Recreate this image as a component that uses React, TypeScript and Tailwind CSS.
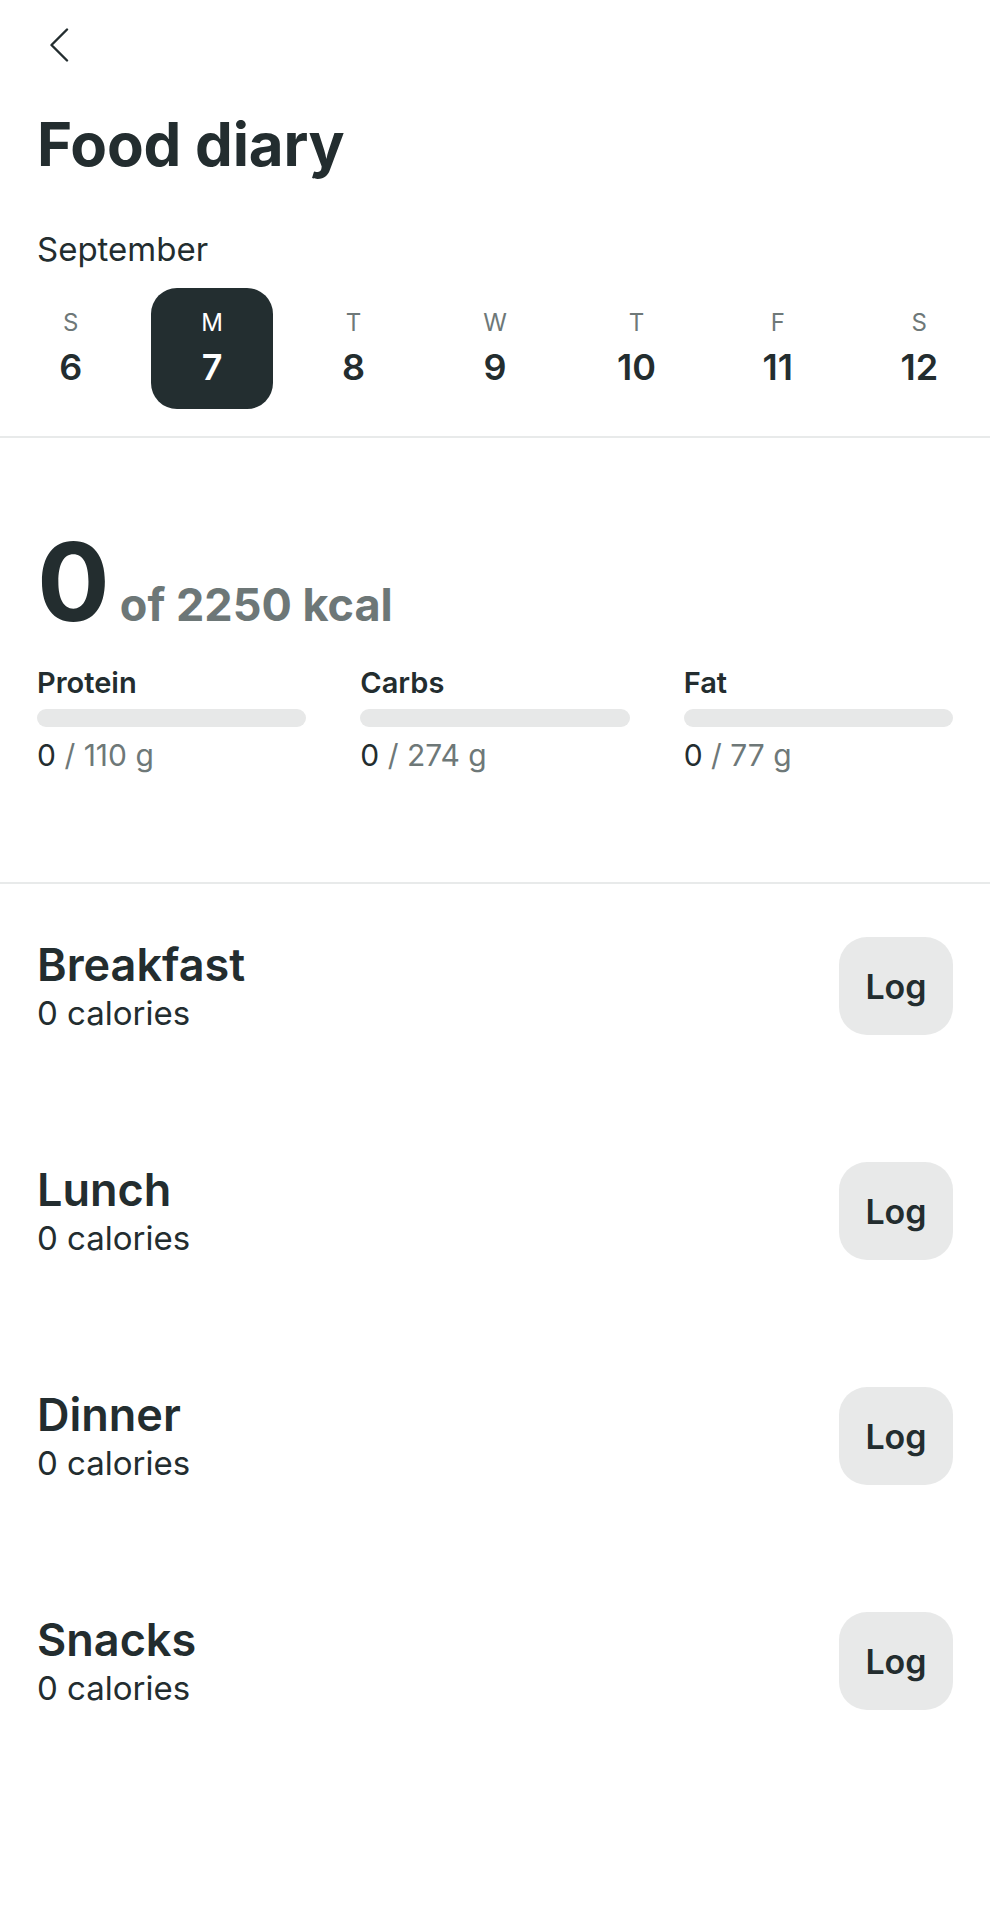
const days = [
  { letter: "S", num: 6 },
  { letter: "M", num: 7 },
  { letter: "T", num: 8 },
  { letter: "W", num: 9 },
  { letter: "T", num: 10 },
  { letter: "F", num: 11 },
  { letter: "S", num: 12 },
];

const macros = [
  { label: "Protein", goal: "110 g" },
  { label: "Carbs", goal: "274 g" },
  { label: "Fat", goal: "77 g" },
];

const meals = ["Breakfast", "Lunch", "Dinner", "Snacks"];

export default function App() {
  const selected = 7;

  return (
    <div className="min-h-[1920px] w-[990px] bg-white font-['Inter',sans-serif] text-[#232d2f]">
      {/* header */}
      <div className="pl-[49px] pt-[28px]">
        <svg width="20" height="34" viewBox="0 0 20 34" fill="none">
          <path d="M18 1.5L2.5 17L18 32.5" stroke="#232d2f" strokeWidth="2.4" strokeLinecap="round" strokeLinejoin="round" />
        </svg>
      </div>
      <h1 className="mt-[46px] px-[37px] text-[60px] font-bold leading-[72px] tracking-[-0.2px]">Food diary</h1>
      <div className="mt-[49px] px-[37px] text-[33px] leading-[40px]">September</div>

      <div className="mt-[19px] grid grid-cols-7">
        {days.map((d) => {
          const active = d.num === selected;
          return (
            <div key={d.num} className="flex justify-center">
              <div
                className={`flex h-[121px] w-[122px] flex-col items-center pt-[21px] ${
                  active ? "rounded-[26px] bg-[#232e30] text-white" : ""
                }`}
              >
                <span className={`text-[24px] leading-[28px] ${active ? "text-white" : "text-[#6e7878]"}`}>{d.letter}</span>
                <span className="mt-[8px] text-[36px] font-semibold leading-[44px]">{d.num}</span>
              </div>
            </div>
          );
        })}
      </div>

      <div className="mt-[27px] h-[2px] bg-[#e8eaea]" />

      {/* summary */}
      <div className="px-[37px] pb-[109px] pt-[90px]">
        <div className="flex items-baseline">
          <span className="text-[108px] font-bold leading-[108px]">0</span>
          <span className="ml-[10px] text-[45px] font-bold leading-[52px] text-[#6d7777]">of 2250 kcal</span>
        </div>
        <div className="mt-[30px] grid grid-cols-3 gap-x-[54px]">
          {macros.map((m) => (
            <div key={m.label}>
              <div className="text-[29px] font-semibold leading-[34px]">{m.label}</div>
              <div className="mt-[9px] h-[18px] rounded-full bg-[#e7e8e8]" />
              <div className="mt-[10px] text-[30px] leading-[36px] text-[#6e7878]">
                <span className="text-[#232d2f]">0</span> / {m.goal}
              </div>
            </div>
          ))}
        </div>
      </div>

      <div className="h-[2px] bg-[#e8eaea]" />

      {/* meals */}
      <div className="flex flex-col gap-[127px] px-[37px] pt-[53px]">
        {meals.map((meal) => (
          <div key={meal} className="flex items-center justify-between">
            <div>
              <div className="text-[45px] font-semibold leading-[54px]">{meal}</div>
              <div className="text-[33px] leading-[42px]">0 calories</div>
            </div>
            <button className="h-[98px] w-[114px] rounded-[28px] bg-[#e8e9e9] text-[34px] font-semibold text-[#232d2f]">
              Log
            </button>
          </div>
        ))}
      </div>
    </div>
  );
}
